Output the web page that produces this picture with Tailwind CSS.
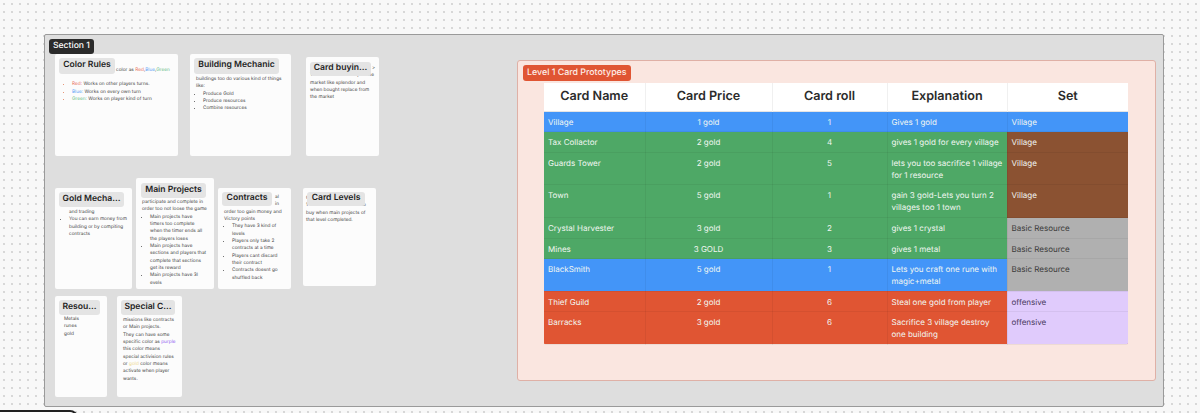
<!DOCTYPE html>
<html lang="en">
  <head>
    <meta charset="UTF-8" />
    <title>Section 1</title>
    <script src="https://cdn.jsdelivr.net/npm/@tailwindcss/browser@4"></script>
  </head>
  <body class="relative w-[1200px] h-[413px] overflow-hidden bg-[#f8f8f8] bg-[radial-gradient(#d6d6d6_0.7px,transparent_0.9px)] bg-[size:8px_8px] [font-family:Inter,sans-serif] [text-rendering:geometricPrecision]">
    <!-- next section peeking in at the bottom -->
    <div class="absolute left-[-12px] top-[410px] w-[90px] h-[20px] bg-white border-2 border-[#222] rounded-lg"></div>

    <!-- Section -->
    <div class="absolute left-[44px] top-[34px] w-[1120px] h-[373px] bg-[#dedede] border border-[#9a9a9a] rounded-[2px]">
      <div class="absolute left-[4px] top-[4px] h-[15px] px-[4px] flex items-center rounded-[3px] bg-[#2b2b2b] text-white text-[8.6px] font-medium">Section 1</div>

      <!-- Color Rules -->
      <div class="absolute left-[10px] top-[19px] w-[123px] h-[102px] bg-[#fcfcfc] rounded-[2px] overflow-hidden text-[4.75px] leading-[7.33px] text-[#444]">
        <div class="absolute left-[4px] top-[4px] h-[16px] w-[56px] flex items-center justify-center rounded-[3px] bg-[#e4e4e4] text-[#1e1e1e] text-[8.6px] font-semibold">Color Rules</div>
        <p class="pl-[61px] pt-[13px]">color as <span class="text-[#e8705a]">Red</span>,<span class="text-[#5aa2f5]">Blue</span>,<span class="text-[#6cc08a]">Green</span></p>
        <ul class="list-disc pl-[17px] pt-[7px] marker:text-[#e0764e]">
          <li><span class="text-[#e8705a]">Red:</span> Works on other players turns.</li>
          <li><span class="text-[#5aa2f5]">Blue:</span> Works on every own turn</li>
          <li><span class="text-[#6cc08a]">Green:</span> Works on player kind of turn</li>
        </ul>
      </div>

      <!-- Building Mechanic -->
      <div class="absolute left-[145px] top-[19px] w-[101px] h-[102px] bg-[#fcfcfc] rounded-[2px] overflow-hidden text-[4.75px] leading-[7.33px] text-[#444]">
        <div class="absolute left-[4px] top-[4px] h-[16px] w-[85px] flex items-center justify-center rounded-[3px] bg-[#e4e4e4] text-[#1e1e1e] text-[8.6px] font-semibold">Building Mechanic</div>
        <p class="pl-[6px] pr-[6px] pt-[22px]">buildings too do various kind of things like:</p>
        <ul class="list-disc pl-[13px]">
          <li>Produce Gold</li>
          <li>Produce resources</li>
          <li>Combine resources</li>
        </ul>
      </div>

      <!-- Card buying -->
      <div class="absolute left-[261px] top-[22px] w-[73px] h-[99px] bg-[#fcfcfc] rounded-[2px] overflow-hidden text-[4.75px] leading-[7.33px] text-[#444]">
        <div class="absolute left-[4px] top-[5px] h-[14px] w-[61px] flex items-center justify-center rounded-[3px] bg-[#e4e4e4] text-[#1e1e1e] text-[8.6px] font-semibold">Card buyin...</div>
        <p class="pl-[66px] pt-[8px]">&gt;</p>
        <p class="pl-[4px] pr-[2px]">The cards are lined up in the market like splendor and<br />when bought replace from<br />the market</p>
      </div>

      <!-- Gold Mechanic -->
      <div class="absolute left-[10px] top-[153px] w-[77px] h-[101px] bg-[#fcfcfc] rounded-[2px] overflow-hidden text-[4.75px] leading-[7.33px] text-[#444]">
        <div class="absolute left-[4px] top-[4px] h-[15px] w-[65px] flex items-center justify-center rounded-[3px] bg-[#e4e4e4] text-[#1e1e1e] text-[8.6px] font-semibold">Gold Mecha...</div>
        <ul class="list-disc pl-[14px] pr-[4px] pt-[21px]">
          <li class="list-none">and trading</li>
          <li>You can earn money from building or by compiting contracts</li>
        </ul>
      </div>

      <!-- Main Projects -->
      <div class="absolute left-[91px] top-[143px] w-[78px] h-[111px] bg-[#fcfcfc] rounded-[2px] overflow-hidden text-[4.75px] leading-[7.33px] text-[#444]">
        <div class="absolute left-[5px] top-[5px] h-[15px] w-[65px] flex items-center justify-center rounded-[3px] bg-[#e4e4e4] text-[#1e1e1e] text-[8.6px] font-semibold">Main Projects</div>
        <p class="pl-[6px] pr-[2px] pt-[21px]">participate and complete in<br />order too not loose the game</p>
        <ul class="list-disc pl-[14px] pr-[6px]">
          <li>Main projects have<br />timers too complete<br />when the timer ends all<br />the players loses</li>
          <li>Main projects have<br />sections and players that<br />complete that sections<br />get its reward</li>
          <li>Main projects have 3l<br />evels</li>
        </ul>
      </div>

      <!-- Contracts -->
      <div class="absolute left-[173px] top-[153px] w-[73px] h-[101px] bg-[#fcfcfc] rounded-[2px] overflow-hidden text-[4.75px] leading-[7.33px] text-[#444]">
        <div class="absolute left-[4px] top-[4px] h-[14px] w-[50px] flex items-center justify-center rounded-[3px] bg-[#e4e4e4] text-[#1e1e1e] text-[8.6px] font-semibold">Contracts</div>
        <p class="pl-[57px] pt-[6px]">al</p>
        <p class="pl-[57px]">in</p>
        <p class="pl-[6px] pr-[4px]">order too gain money and Victory points</p>
        <ul class="list-disc pl-[14px] pr-[8px]">
          <li>They have 3 kind of levels</li>
          <li>Players only take 2 contracts at a time</li>
          <li>Players cant discard their contract</li>
          <li>Contracts doesnt go shuffled back</li>
        </ul>
      </div>

      <!-- Card Levels -->
      <div class="absolute left-[258px] top-[153px] w-[73px] h-[98px] bg-[#fcfcfc] rounded-[2px] overflow-hidden text-[4.75px] leading-[7.33px] text-[#444]">
        <div class="absolute left-[4px] top-[4px] h-[14px] w-[58px] flex items-center justify-center rounded-[3px] bg-[#e4e4e4] text-[#1e1e1e] text-[8.6px] font-semibold">Card Levels</div>
        <p class="pl-[3px] pr-[2px] pt-[7px]">Cards have levels.<br />1-2 levels are unlocked too buy when main projects of that level completed.</p>
      </div>

      <!-- Resources -->
      <div class="absolute left-[10px] top-[261px] w-[52px] h-[101px] bg-[#fcfcfc] rounded-[2px] overflow-hidden text-[4.75px] leading-[7.33px] text-[#444]">
        <div class="absolute left-[4px] top-[4px] h-[15px] w-[41px] flex items-center justify-center rounded-[3px] bg-[#e4e4e4] text-[#1e1e1e] text-[8.6px] font-semibold">Resou...</div>
        <p class="pl-[9px] pt-[20px]">Metals<br />runes<br />gold</p>
      </div>

      <!-- Special Cards -->
      <div class="absolute left-[72px] top-[261px] w-[65px] h-[101px] bg-[#fcfcfc] rounded-[2px] overflow-hidden text-[4.75px] leading-[7.33px] text-[#444]">
        <div class="absolute left-[4px] top-[4px] h-[15px] w-[54px] flex items-center justify-center rounded-[3px] bg-[#e4e4e4] text-[#1e1e1e] text-[8.6px] font-semibold">Special C...</div>
        <p class="pl-[6px] pt-[21px]">missions like contracts<br />or Main projects.<br />They can have some<br />specific color as <span class="text-[#8f5cf0]">purple</span><br />this color means<br />special activision rules<br />or <span class="text-[#efd98a]">gold</span> color means<br />activate when player<br />wants.</p>
      </div>

      <!-- Level 1 frame -->
      <div class="absolute left-[472px] top-[25px] w-[639px] h-[321px] bg-[#fae6e0] border border-[#dfb0a6] rounded-[3px] px-[26px] pt-[4px]">
        <div class="w-fit h-[16px] -ml-[21px] px-[4px] flex items-center rounded-[3px] bg-[#e05533] text-[#fdeee9] text-[8.85px] font-medium">Level 1 Card Prototypes</div>
        <div class="mt-[2px] w-[584px] rounded-b-[2px] overflow-hidden text-[8px] leading-[12.3px]">
          <table class="w-full table-fixed border-collapse text-[#f2f7f2]">
            <colgroup>
              <col class="w-[101px]" />
              <col class="w-[127px]" />
              <col class="w-[115px]" />
              <col class="w-[120px]" />
              <col class="w-[121px]" />
            </colgroup>
            <thead class="bg-white text-[#2b2b2b] text-[12.6px] font-semibold">
              <tr class="h-[28px] border-b border-[#e4e4e4]">
                <th class="font-semibold border-r border-[#f0f0f0]">Card Name</th>
                <th class="font-semibold border-r border-[#f0f0f0]">Card Price</th>
                <th class="font-semibold border-r border-[#f0f0f0]">Card roll</th>
                <th class="font-semibold border-r border-[#f0f0f0]">Explanation</th>
                <th class="font-semibold">Set</th>
              </tr>
            </thead>
            <tbody class="[&_td]:align-top [&_td]:pt-[4px] [&_td]:px-[4px] [&_td]:border-b [&_td]:border-r [&_td]:border-black/5">
              <tr class="h-[20.5px] bg-[#4395f8]">
                <td>Village</td><td class="text-center">1 gold</td><td class="text-center">1</td><td>Gives 1 gold</td><td>Village</td>
              </tr>
              <tr class="h-[20.5px] bg-[#4ea866]">
                <td>Tax Collactor</td><td class="text-center">2 gold</td><td class="text-center">4</td><td>gives 1 gold for every village</td><td class="bg-[#8b5232]">Village</td>
              </tr>
              <tr class="h-[32.5px] bg-[#4ea866]">
                <td>Guards Tower</td><td class="text-center">2 gold</td><td class="text-center">5</td><td>lets you too sacrifice 1 village for 1 resource</td><td class="bg-[#8b5232]">Village</td>
              </tr>
              <tr class="h-[33px] bg-[#4ea866]">
                <td>Town</td><td class="text-center">5 gold</td><td class="text-center">1</td><td>gain 3 gold-Lets you turn 2 villages too 1 town</td><td class="bg-[#8b5232]">Village</td>
              </tr>
              <tr class="h-[20.5px] bg-[#4ea866]">
                <td>Crystal Harvester</td><td class="text-center">3 gold</td><td class="text-center">2</td><td>gives 1 crystal</td><td class="bg-[#b0b0b0] text-[#3a3a3a]">Basic Resource</td>
              </tr>
              <tr class="h-[20.5px] bg-[#4ea866]">
                <td>Mines</td><td class="text-center">3 GOLD</td><td class="text-center">3</td><td>gives 1 metal</td><td class="bg-[#b0b0b0] text-[#3a3a3a]">Basic Resource</td>
              </tr>
              <tr class="h-[32.5px] bg-[#4395f8]">
                <td>BlackSmith</td><td class="text-center">5 gold</td><td class="text-center">1</td><td>Lets you craft one rune with magic+metal</td><td class="bg-[#b0b0b0] text-[#3a3a3a]">Basic Resource</td>
              </tr>
              <tr class="h-[20.5px] bg-[#e05533]">
                <td>Thief Guild</td><td class="text-center">2 gold</td><td class="text-center">6</td><td>Steal one gold from player</td><td class="bg-[#e0cbfc] text-[#4a3a5c]">offensive</td>
              </tr>
              <tr class="h-[32.5px] bg-[#e05533]">
                <td>Barracks</td><td class="text-center">3 gold</td><td class="text-center">6</td><td>Sacrifice 3 village destroy one building</td><td class="bg-[#e0cbfc] text-[#4a3a5c]">offensive</td>
              </tr>
            </tbody>
          </table>
        </div>
      </div>
    </div>
  </body>
</html>
